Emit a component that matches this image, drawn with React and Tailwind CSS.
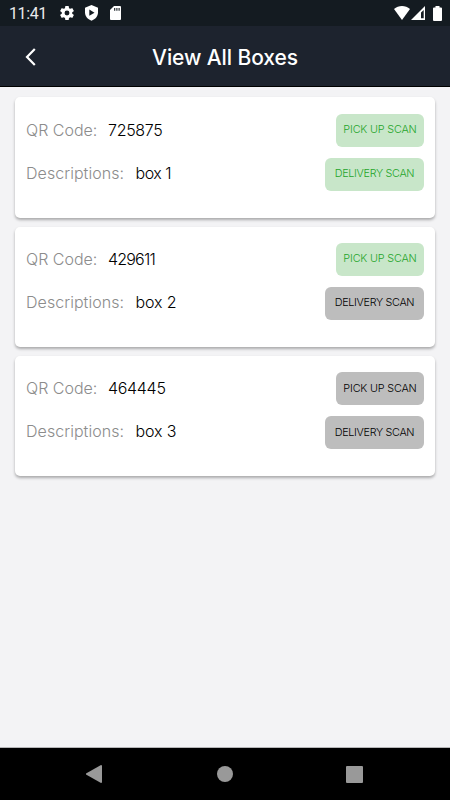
const boxes = [
  { code: '725875', codeSpacing: 'tracking-[-0.3px]', name: 'box 1', nameSpacing: 'tracking-[-0.5px]', picked: true, delivered: true },
  { code: '429611', codeSpacing: 'tracking-[-0.8px]', name: 'box 2', nameSpacing: 'tracking-[-0.1px]', picked: true, delivered: false },
  { code: '464445', codeSpacing: 'tracking-[-0.3px]', name: 'box 3', nameSpacing: 'tracking-[-0.1px]', picked: false, delivered: false },
];

function StatusBar() {
  return (
    <div className="flex h-[26px] shrink-0 items-center bg-[#141b21] pl-[9px] pr-[8px] text-white">
      <span className="w-[51px] pt-[2px] font-[Roboto] text-[16px] leading-[26px] font-normal tracking-[-0.4px] text-[#e9eaeb]">11:41</span>
      <svg className="h-[14px] w-[14px]" viewBox="2.3 2 19.4 20" fill="currentColor">
        <path fillRule="evenodd" d="M19.43 12.98a7.8 7.8 0 0 0 0-1.96l2.11-1.65a.5.5 0 0 0 .12-.64l-2-3.46a.5.5 0 0 0-.61-.22l-2.49 1a7.3 7.3 0 0 0-1.69-.98l-.38-2.65A.5.5 0 0 0 14 2h-4a.5.5 0 0 0-.49.42l-.38 2.65c-.61.25-1.17.59-1.69.98l-2.49-1a.5.5 0 0 0-.61.22l-2 3.46a.5.5 0 0 0 .12.64l2.11 1.65a7.9 7.9 0 0 0 0 1.96l-2.11 1.65a.5.5 0 0 0-.12.64l2 3.46c.12.22.39.3.61.22l2.49-1c.52.4 1.08.73 1.69.98l.38 2.65c.03.24.24.42.49.42h4c.25 0 .46-.18.49-.42l.38-2.65c.61-.25 1.17-.59 1.69-.98l2.49 1c.23.09.49 0 .61-.22l2-3.46a.5.5 0 0 0-.12-.64zM12 15.5a3.5 3.5 0 1 1 0-7 3.5 3.5 0 0 1 0 7z" />
      </svg>
      <svg className="ml-[11px] h-[16px] w-[13px]" viewBox="0 0 13 16" fill="none">
        <path fill="currentColor" d="M6.5 0 13 2.7v4.6c0 4-2.6 7-6.5 8.4C2.6 14.3 0 11.3 0 7.3V2.7z" />
        <path fill="#141b21" d="M4.3 4.6v6.2L9.5 7.7z" />
      </svg>
      <svg className="ml-[12px] h-[14px] w-[11px]" viewBox="0 0 11 14" fill="none">
        <path fill="currentColor" d="M4 0h6a1 1 0 0 1 1 1v12a1 1 0 0 1-1 1H1a1 1 0 0 1-1-1V4z" />
        <path stroke="#141b21" strokeWidth="1.1" d="M4.7 1.900v2.800M6.900 1.900v2.800M9.100 1.900v2.800" />
      </svg>
      <svg className="ml-auto h-[14px] w-[16px]" viewBox="0 0 16 14" fill="currentColor">
        <path d="M0 3C4.500-1 11.500-1 16 3L8 14z" />
      </svg>
      <svg className="ml-[1px] h-[14px] w-[14px]" viewBox="0 0 14 14" fill="none">
        <path fill="currentColor" d="M14 0v14H0z" />
        <path fill="#141b21" d="M12.700 4v8.300H10V6.500z" />
      </svg>
      <svg className="ml-[8px] h-[15px] w-[9px]" viewBox="0 0 9 15" fill="currentColor">
        <path d="M2.5 0h4v1.500H8a1 1 0 0 1 1 1V14a1 1 0 0 1-1 1H1a1 1 0 0 1-1-1V2.500a1 1 0 0 1 1-1h1.500z" />
      </svg>
    </div>
  );
}

function Header() {
  return (
    <header className="grid h-[61px] shrink-0 grid-cols-[60px_1fr_60px] items-center border-b border-black bg-[#1d232e] pt-[2px]">
      <svg className="ml-[25px] h-[18px] w-[11px]" viewBox="0 0 11 18" fill="none" stroke="white" strokeWidth="2.2">
        <path d="M9.8 1 2 9l7.800 8" />
      </svg>
      <h1 className="pt-[2px] text-center text-[21px] leading-[30px] font-medium tracking-[-0.1px] whitespace-nowrap text-white">View All Boxes</h1>
    </header>
  );
}

function ScanButton({ done, wide, children }) {
  return (
    <button
      className={`flex h-[33px] items-center justify-center rounded-[6px] pt-px text-[10.8px] leading-none whitespace-nowrap ${
        wide ? 'w-[99px] tracking-[-0.32px]' : 'w-[88px] tracking-[-0.16px]'
      } ${done ? 'bg-[#c8e6c9] text-[#24a52a]' : 'bg-[#bdbdbd] text-black'}`}
    >
      {children}
    </button>
  );
}

function BoxCard({ box }) {
  return (
    <article className="flex h-[120.2px] flex-col gap-[11px] rounded-[5px] bg-white pt-[16.200px] pr-[11px] pl-[11px] shadow-[0_2px_3px_rgba(0,0,0,0.3)]">
      <div className="flex h-[33px] items-center text-[16px] whitespace-nowrap">
        <span className="w-[82px] pb-px text-[#8c8c8c]">QR Code:</span>
        <span className={`mr-auto pb-px text-black ${box.codeSpacing}`}>{box.code}</span>
        <ScanButton done={box.picked}>PICK UP SCAN</ScanButton>
      </div>
      <div className="flex h-[33px] items-center text-[16px] whitespace-nowrap">
        <span className="w-[109.5px] pb-[2px] tracking-[0.05px] text-[#8c8c8c]">Descriptions:</span>
        <span className={`mr-auto pb-[2px] text-black ${box.nameSpacing}`}>{box.name}</span>
        <ScanButton done={box.delivered} wide>DELIVERY SCAN</ScanButton>
      </div>
    </article>
  );
}

function NavigationBar() {
  return (
    <nav className="flex h-[52px] shrink-0 items-center bg-black pr-[87px] pl-[86px] text-[#999]">
      <svg className="h-[18px] w-[16px]" viewBox="0 0 16 18" fill="currentColor">
        <path d="M15 0q1 0 1 1v16q0 1-1 1L0 9.500v-1z" />
      </svg>
      <div className="mr-auto ml-[115px] h-4 w-4 rounded-full bg-[#999]" />
      <div className="h-[17px] w-[17px] rounded-[1px] bg-[#999]" />
    </nav>
  );
}

export default function App() {
  return (
    <div className="flex h-[800px] w-[450px] flex-col overflow-hidden bg-[#f3f3f5] font-[Inter,sans-serif] font-light">
      <StatusBar />
      <Header />
      <main className="flex min-h-0 flex-1 flex-col gap-[9px] border-b border-[#b5b5b7] px-[15px] pt-[10.4px]">
        {boxes.map((box) => (
          <BoxCard key={box.code} box={box} />
        ))}
      </main>
      <NavigationBar />
    </div>
  );
}
